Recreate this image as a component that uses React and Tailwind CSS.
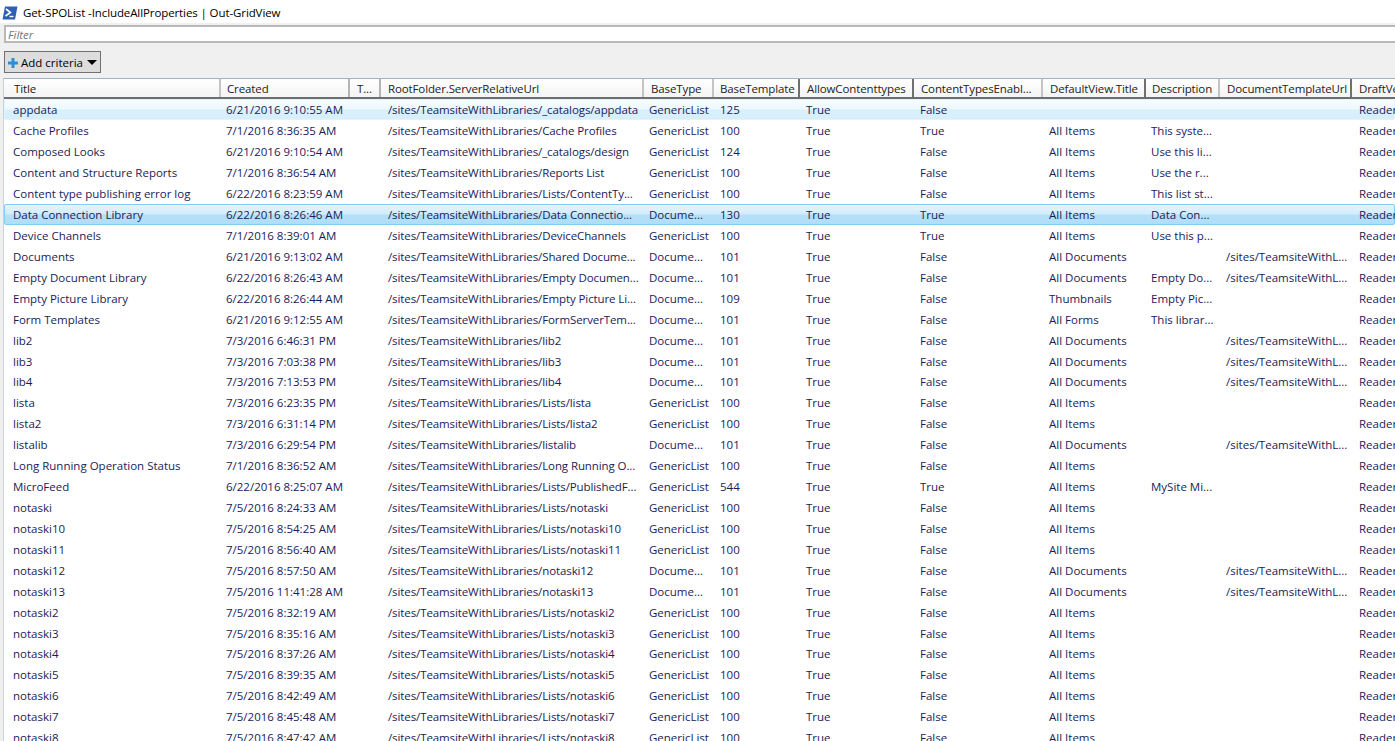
import React from 'react'

const cols = 'grid grid-cols-[217px_129px_31px_263px_70px_86px_114px_129px_103px_74px_132px_60px]'
const rowCols = 'grid grid-cols-[216px_129px_31px_263px_70px_86px_114px_129px_103px_74px_132px_60px]'

const headers = [
    ['Title', 'pl-[10px]', 'border-[#c4c4c4]'],
    ['Created', 'pl-[6px]', 'border-[#b4b4b4]'],
    ['T...', 'pl-[7px]', 'border-[#b4b4b4]'],
    ['RootFolder.ServerRelativeUrl', 'pl-[7px]', 'border-[#c4c4c4]'],
    ['BaseType', 'pl-[7px]', 'border-[#c4c4c4]'],
    ['BaseTemplate', 'pl-[6px]', 'border-[#707070]'],
    ['AllowContenttypes', 'pl-[7px]', 'border-[#707070]'],
    ['ContentTypesEnabl...', 'pl-[7px]', 'border-[#c4c4c4]'],
    ['DefaultView.Title', 'pl-[7px]', 'border-[#707070]'],
    ['Description', 'pl-[6px]', 'border-[#c4c4c4]'],
    ['DocumentTemplateUrl', 'pl-[7px]', 'border-[#707070]'],
    ['DraftVersionVisibility', 'pl-[7px]', 'border-transparent'],
]

const P = '/sites/TeamsiteWithLibraries/'
const DT = '/sites/TeamsiteWithL...'

// title, created, url, type, template, enabled, view, description, doc template
const rows = [
    ['appdata', '6/21/2016 9:10:55 AM', P + '_catalogs/appdata', 'GenericList', '125', 'False', '', '', ''],
    ['Cache Profiles', '7/1/2016 8:36:35 AM', P + 'Cache Profiles', 'GenericList', '100', 'True', 'All Items', 'This syste...', ''],
    ['Composed Looks', '6/21/2016 9:10:54 AM', P + '_catalogs/design', 'GenericList', '124', 'False', 'All Items', 'Use this li...', ''],
    ['Content and Structure Reports', '7/1/2016 8:36:54 AM', P + 'Reports List', 'GenericList', '100', 'False', 'All Items', 'Use the r...', ''],
    ['Content type publishing error log', '6/22/2016 8:23:59 AM', P + 'Lists/ContentTy...', 'GenericList', '100', 'False', 'All Items', 'This list st...', ''],
    ['Data Connection Library', '6/22/2016 8:26:46 AM', P + 'Data Connectio...', 'Docume...', '130', 'True', 'All Items', 'Data Con...', ''],
    ['Device Channels', '7/1/2016 8:39:01 AM', P + 'DeviceChannels', 'GenericList', '100', 'True', 'All Items', 'Use this p...', ''],
    ['Documents', '6/21/2016 9:13:02 AM', P + 'Shared Docume...', 'Docume...', '101', 'False', 'All Documents', '', DT],
    ['Empty Document Library', '6/22/2016 8:26:43 AM', P + 'Empty Documen...', 'Docume...', '101', 'False', 'All Documents', 'Empty Do...', DT],
    ['Empty Picture Library', '6/22/2016 8:26:44 AM', P + 'Empty Picture Li...', 'Docume...', '109', 'False', 'Thumbnails', 'Empty Pic...', ''],
    ['Form Templates', '6/21/2016 9:12:55 AM', P + 'FormServerTem...', 'Docume...', '101', 'False', 'All Forms', 'This librar...', ''],
    ['lib2', '7/3/2016 6:46:31 PM', P + 'lib2', 'Docume...', '101', 'False', 'All Documents', '', DT],
    ['lib3', '7/3/2016 7:03:38 PM', P + 'lib3', 'Docume...', '101', 'False', 'All Documents', '', DT],
    ['lib4', '7/3/2016 7:13:53 PM', P + 'lib4', 'Docume...', '101', 'False', 'All Documents', '', DT],
    ['lista', '7/3/2016 6:23:35 PM', P + 'Lists/lista', 'GenericList', '100', 'False', 'All Items', '', ''],
    ['lista2', '7/3/2016 6:31:14 PM', P + 'Lists/lista2', 'GenericList', '100', 'False', 'All Items', '', ''],
    ['listalib', '7/3/2016 6:29:54 PM', P + 'listalib', 'Docume...', '101', 'False', 'All Documents', '', DT],
    ['Long Running Operation Status', '7/1/2016 8:36:52 AM', P + 'Long Running O...', 'GenericList', '100', 'False', 'All Items', '', ''],
    ['MicroFeed', '6/22/2016 8:25:07 AM', P + 'Lists/PublishedF...', 'GenericList', '544', 'True', 'All Items', 'MySite Mi...', ''],
    ['notaski', '7/5/2016 8:24:33 AM', P + 'Lists/notaski', 'GenericList', '100', 'False', 'All Items', '', ''],
    ['notaski10', '7/5/2016 8:54:25 AM', P + 'Lists/notaski10', 'GenericList', '100', 'False', 'All Items', '', ''],
    ['notaski11', '7/5/2016 8:56:40 AM', P + 'Lists/notaski11', 'GenericList', '100', 'False', 'All Items', '', ''],
    ['notaski12', '7/5/2016 8:57:50 AM', P + 'notaski12', 'Docume...', '101', 'False', 'All Documents', '', DT],
    ['notaski13', '7/5/2016 11:41:28 AM', P + 'notaski13', 'Docume...', '101', 'False', 'All Documents', '', DT],
    ['notaski2', '7/5/2016 8:32:19 AM', P + 'Lists/notaski2', 'GenericList', '100', 'False', 'All Items', '', ''],
    ['notaski3', '7/5/2016 8:35:16 AM', P + 'Lists/notaski3', 'GenericList', '100', 'False', 'All Items', '', ''],
    ['notaski4', '7/5/2016 8:37:26 AM', P + 'Lists/notaski4', 'GenericList', '100', 'False', 'All Items', '', ''],
    ['notaski5', '7/5/2016 8:39:35 AM', P + 'Lists/notaski5', 'GenericList', '100', 'False', 'All Items', '', ''],
    ['notaski6', '7/5/2016 8:42:49 AM', P + 'Lists/notaski6', 'GenericList', '100', 'False', 'All Items', '', ''],
    ['notaski7', '7/5/2016 8:45:48 AM', P + 'Lists/notaski7', 'GenericList', '100', 'False', 'All Items', '', ''],
    ['notaski8', '7/5/2016 8:47:42 AM', P + 'Lists/notaski8', 'GenericList', '100', 'False', 'All Items', '', ''],
]

const rowStyle = (index) => {
    if (index === 0) return 'bg-[linear-gradient(#f8fcff_0%,#ecf8fe_48%,#d9f0fc_52%,#d6effc_100%)] border-[#e3f3fc] rounded-[2px]'
    if (index === 5) return 'bg-[linear-gradient(#e4f4fd_0%,#d2ecfb_48%,#b4e0f9_52%,#b0def8_100%)] border-[#84cdf2] rounded-[2px]'
    return 'border-transparent'
}

const Cell = ({ className = '', children }) => (
    <div className={`overflow-hidden whitespace-nowrap ${className}`}>{children}</div>
)

const App = () => {
    return (
        <div className="h-[741px] w-[1395px] overflow-hidden bg-[#f0f0f0] text-[11.5px] text-[#1b1b58] font-['Open_Sans','Liberation_Sans',sans-serif]">
            <div className="flex h-[23px] items-center bg-white pl-[2px] pt-[2px]">
                <svg width="16" height="14" viewBox="0 0 16 14">
                    <path d="M3 0.5H15.5L13 13.5H0.5Z" fill="#2f5fb3" />
                    <path d="M4 3L8.5 6.5L3.5 10" fill="none" stroke="#fff" strokeWidth="1.6" />
                    <path d="M7.5 10.5H11.5" stroke="#fff" strokeWidth="1.4" />
                </svg>
                <span className="ml-[5px] tracking-[-0.1px] text-black">Get-SPOList -IncludeAllProperties | Out-GridView</span>
            </div>
            <div className="pl-[4px] pt-[2px]">
                <div className="flex h-[18px] items-center border-y-2 border-l-2 border-[#b9b9b9] bg-white pl-[2px] pt-[1px] italic text-[#777777]">
                    Filter
                </div>
            </div>
            <div className="pl-[4px] pt-[8px]">
                <button className="flex h-[22px] w-[97px] items-center whitespace-nowrap border border-[#707070] bg-[#dddddd] pl-[2px] pt-[1px] text-black">
                    <svg width="10" height="10" viewBox="0 0 10 10" className="ml-[1px]">
                        <path d="M3.5 0H6.5V3.5H10V6.5H6.5V10H3.5V6.5H0V3.5H3.5Z" fill="#2f8fd0" />
                    </svg>
                    <span className="ml-[3px]">Add criteria</span>
                    <svg width="10" height="5" viewBox="0 0 10 5" className="ml-[4px]">
                        <path d="M0 0H10L5 5Z" fill="#000" />
                    </svg>
                </button>
            </div>
            <div className="ml-[3px] mt-[5px] h-[663px] overflow-hidden border-l border-t border-[#9db4c8] border-l-[#c5d3de] bg-white">
                <div className={`${cols} h-[20px] border-b-2 border-[#6e6e6e] bg-[linear-gradient(#ffffff,#f4f4f4)] tracking-[-0.12px] text-[#222222]`}>
                    {headers.map(([label, pad, line]) => (
                        <Cell key={label} className={`h-[18px] border-r-2 pt-[2px] leading-[16px] ${pad} ${line}`}>
                            {label}
                        </Cell>
                    ))}
                </div>
                {rows.map((row, index) => (
                    <div key={row[0]} className={`${rowCols} h-[20.93px] items-center border pt-[2px] leading-[16px] ${rowStyle(index)}`}>
                        <Cell className="pl-[8px]">{row[0]}</Cell>
                        <Cell className="pl-[5px]">{row[1]}</Cell>
                        <Cell />
                        <Cell className="pl-[7px] tracking-[-0.1px]">{row[2]}</Cell>
                        <Cell className="pl-[5px]">{row[3]}</Cell>
                        <Cell className="pl-[6px]">{row[4]}</Cell>
                        <Cell className="pl-[6px]">True</Cell>
                        <Cell className="pl-[6px]">{row[5]}</Cell>
                        <Cell className="pl-[6px]">{row[6]}</Cell>
                        <Cell className="pl-[5px]">{row[7]}</Cell>
                        <Cell className="pl-[6px]">{row[8]}</Cell>
                        <Cell className="pl-[7px]">Reader</Cell>
                    </div>
                ))}
            </div>
        </div>
    )
}

export default App
